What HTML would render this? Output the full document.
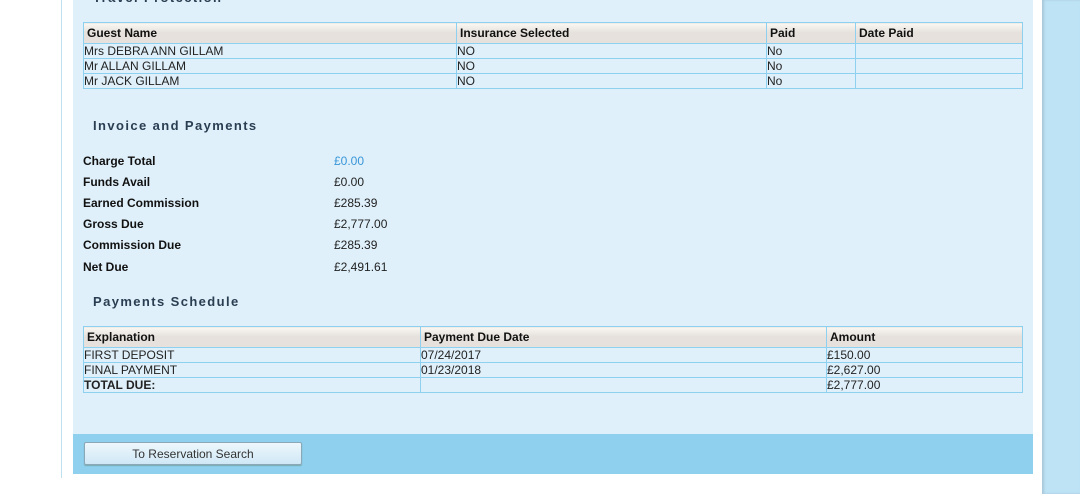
<!DOCTYPE html>
<html><head><meta charset="utf-8"><style>
*{margin:0;padding:0;box-sizing:border-box}
body{width:1080px;height:494px;background:#fff;position:relative;overflow:hidden;font-family:"Liberation Sans",Arial,sans-serif;font-size:12px;color:#222}
.abs{position:absolute}
.lline{left:61px;top:0;width:1px;height:478px;background:#bfe0f0}
.panel{left:73px;top:0;width:960px;height:434px;background:#dff0fa}
.foot{left:73px;top:434px;width:960px;height:40px;background:#8fd0ef}
.side{left:1042px;top:0;width:38px;height:494px;background:#bde3f5;box-shadow:inset 2px 0 2px #a8c8d8}
.h{font-weight:bold;font-size:13px;letter-spacing:1.4px;color:#2a3e52}
table{position:absolute;border-collapse:collapse;table-layout:fixed}
td,th{border:1px solid #8ed0ef;height:15px;line-height:13px;padding:0;text-align:left;font-size:12px;white-space:nowrap;overflow:hidden}
th{height:21px;font-weight:bold;padding-left:3px;background:linear-gradient(#faf8f4,#e6e1dc 45%,#e6e1dc);color:#111}
.lab{left:83px;font-weight:bold;color:#111}
.val{left:334px;color:#222}
.btn{left:84px;top:442px;width:218px;height:23px;border:1px solid #8aa8b8;border-radius:2px;background:linear-gradient(#eef7fc,#cfe8f6);text-align:center;line-height:23px;color:#333;box-shadow:0 1px 1px #7aa}
</style></head><body>
<div class="abs lline"></div>
<div class="abs panel"></div>
<div class="abs foot"></div>
<div class="abs side"></div>
<div class="abs h" style="left:93px;top:-10px">Travel Protection</div>
<table style="left:83px;top:22px;width:940px">
<colgroup><col style="width:373px"><col style="width:310px"><col style="width:89px"><col></colgroup>
<tr><th>Guest Name</th><th>Insurance Selected</th><th>Paid</th><th>Date Paid</th></tr>
<tr><td>Mrs DEBRA ANN GILLAM</td><td>NO</td><td>No</td><td></td></tr>
<tr><td>Mr ALLAN GILLAM</td><td>NO</td><td>No</td><td></td></tr>
<tr><td>Mr JACK GILLAM</td><td>NO</td><td>No</td><td></td></tr>
</table>
<div class="abs h" style="left:93px;top:118px">Invoice and Payments</div>
<div class="abs lab" style="top:154px">Charge Total</div><div class="abs val" style="top:154px;color:#3a96d8">£0.00</div>
<div class="abs lab" style="top:175px">Funds Avail</div><div class="abs val" style="top:175px">£0.00</div>
<div class="abs lab" style="top:196px">Earned Commission</div><div class="abs val" style="top:196px">£285.39</div>
<div class="abs lab" style="top:217px">Gross Due</div><div class="abs val" style="top:217px">£2,777.00</div>
<div class="abs lab" style="top:238px">Commission Due</div><div class="abs val" style="top:238px">£285.39</div>
<div class="abs lab" style="top:260px">Net Due</div><div class="abs val" style="top:260px">£2,491.61</div>
<div class="abs h" style="left:93px;top:294px">Payments Schedule</div>
<table style="left:83px;top:326px;width:940px">
<colgroup><col style="width:337px"><col style="width:406px"><col></colgroup>
<tr><th>Explanation</th><th>Payment Due Date</th><th>Amount</th></tr>
<tr><td>FIRST DEPOSIT</td><td>07/24/2017</td><td>£150.00</td></tr>
<tr><td>FINAL PAYMENT</td><td>01/23/2018</td><td>£2,627.00</td></tr>
<tr><td style="font-weight:bold">TOTAL DUE:</td><td></td><td>£2,777.00</td></tr>
</table>
<div class="abs btn">To Reservation Search</div>
</body></html>
